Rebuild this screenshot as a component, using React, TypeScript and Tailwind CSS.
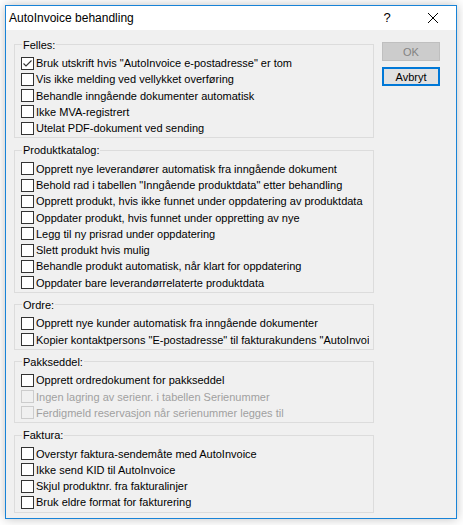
import React from 'react';

type Option = { label: string; checked?: boolean; disabled?: boolean };

const groups: { title: string; options: Option[] }[] = [
  {
    title: 'Felles:',
    options: [
      { label: 'Bruk utskrift hvis "AutoInvoice e-postadresse" er tom', checked: true },
      { label: 'Vis ikke melding ved vellykket overføring' },
      { label: 'Behandle inngående dokumenter automatisk' },
      { label: 'Ikke MVA-registrert' },
      { label: 'Utelat PDF-dokument ved sending' },
    ],
  },
  {
    title: 'Produktkatalog:',
    options: [
      { label: 'Opprett nye leverandører automatisk fra inngående dokument' },
      { label: 'Behold rad i tabellen "Inngående produktdata" etter behandling' },
      { label: 'Opprett produkt, hvis ikke funnet under oppdatering av produktdata' },
      { label: 'Oppdater produkt, hvis funnet under oppretting av nye' },
      { label: 'Legg til ny prisrad under oppdatering' },
      { label: 'Slett produkt hvis mulig' },
      { label: 'Behandle produkt automatisk, når klart for oppdatering' },
      { label: 'Oppdater bare leverandørrelaterte produktdata' },
    ],
  },
  {
    title: 'Ordre:',
    options: [
      { label: 'Opprett nye kunder automatisk fra inngående dokumenter' },
      { label: 'Kopier kontaktpersons "E-postadresse" til fakturakundens "AutoInvoi' },
    ],
  },
  {
    title: 'Pakkseddel:',
    options: [
      { label: 'Opprett ordredokument for pakkseddel' },
      { label: 'Ingen lagring av serienr. i tabellen Serienummer', disabled: true },
      { label: 'Ferdigmeld reservasjon når serienummer legges til', disabled: true },
    ],
  },
  {
    title: 'Faktura:',
    options: [
      { label: 'Overstyr faktura-sendemåte med AutoInvoice' },
      { label: 'Ikke send KID til AutoInvoice' },
      { label: 'Skjul produktnr. fra fakturalinjer' },
      { label: 'Bruk eldre format for fakturering' },
    ],
  },
];

function CheckRow({ label, checked, disabled }: Option) {
  return (
    <div className="flex items-center h-[16.25px] overflow-hidden whitespace-nowrap">
      <span
        className={`w-[13px] h-[13px] shrink-0 border flex items-center justify-center ${
          disabled ? 'border-[#cccccc] bg-[#f0f0f0]' : 'border-[#333333] bg-white'
        }`}
      >
        {checked && (
          <svg width="11" height="11" viewBox="0 0 11 11">
            <path d="M1.5 5.5 L4 8 L9.5 2.5" fill="none" stroke="#333333" strokeWidth="1.1" />
          </svg>
        )}
      </span>
      <span className={`ml-[2px] leading-[16px] ${disabled ? 'text-[#a0a0a0]' : 'text-black'}`}>{label}</span>
    </div>
  );
}

export default function App() {
  return (
    <div className="w-[463px] h-[525px] bg-white pt-[5px] pl-[5px] font-['Segoe_UI','Liberation_Sans',sans-serif] text-[11px] text-black">
      <div className="w-[452px] h-[514px] border border-[#1883d7] bg-[#f0f0f0] shadow-[0_0_10px_rgba(0,0,0,0.25)] flex flex-col">
        {/* title bar */}
        <div className="h-[24px] bg-white flex items-center shrink-0 text-[12px]">
          <span className="pl-[3px] flex-1">AutoInvoice behandling</span>
          <span className="w-[46px] text-center text-[13px]">?</span>
          <span className="w-[46px] flex justify-center">
            <svg width="10" height="10" viewBox="0 0 10 10">
              <path d="M0 0 L10 10 M10 0 L0 10" stroke="#000" strokeWidth="1" />
            </svg>
          </span>
        </div>

        <div className="flex pl-[8px] pt-[6.5px]">
          <div className="w-[360px] flex flex-col gap-[4px]">
            {groups.map((g) => (
              <fieldset key={g.title} className="border border-[#dcdcdc] pl-[6px] pr-[4px] pb-[1px] min-w-0">
                <legend className="ml-[1px] px-[1px] leading-[16px]">{g.title}</legend>
                <div className="pt-[2.5px] flex flex-col">
                  {g.options.map((o) => (
                    <CheckRow key={o.label} {...o} />
                  ))}
                </div>
              </fieldset>
            ))}
          </div>

          <div className="ml-[8px] pt-[5.5px] flex flex-col gap-[6px]">
            <button className="w-[58px] h-[19px] border border-[#bfbfbf] bg-[#cccccc] text-[#838383] leading-[16px]">
              OK
            </button>
            <button className="w-[58px] h-[19px] border-2 border-[#0078d7] bg-[#e1e1e1] text-black leading-[14px]">
              Avbryt
            </button>
          </div>
        </div>
      </div>
    </div>
  );
}
